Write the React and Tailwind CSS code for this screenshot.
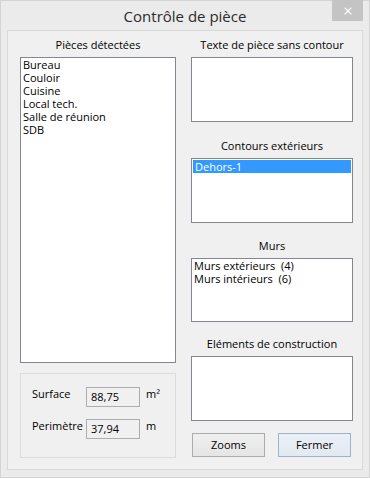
import { X } from 'lucide-react';

const rooms = ['Bureau', 'Couloir', 'Cuisine', 'Local tech.', 'Salle de réunion', 'SDB'];

function Label({ children, h }) {
  return (
    <div className={`flex items-end justify-center pb-[6px] ${h}`}>
      <span className="leading-[13px] text-black">{children}</span>
    </div>
  );
}

function ListBox({ h, children }) {
  return (
    <div className={`border border-[#828790] bg-white ${h}`}>{children}</div>
  );
}

function Field({ label, value, unit }) {
  return (
    <div className="flex items-start">
      <span className="w-[54px] leading-[14px]">{label}</span>
      <div className="w-[54px] h-[20px] border border-[#adadad] bg-[#f0f0f0] pl-[4px] flex items-center">
        {value}
      </div>
      <span className="ml-[6px] leading-[14px]">{unit}</span>
    </div>
  );
}

export default function App() {
  return (
    <div
      className="w-[370px] h-[478px] bg-[#ebebeb] border border-[#d4d4d4] flex flex-col text-[11px] text-black"
      style={{ fontFamily: '"Open Sans", "Noto Sans", sans-serif' }}
    >
      {/* Title bar */}
      <div className="relative h-[29px] flex items-center justify-center">
        <span className="text-[15px] text-[#2b2b2b] leading-none pt-[1px]">Contrôle de pièce</span>
        <div className="absolute top-[-1px] right-[6px] w-[31px] h-[21px] bg-[#c4c4c4] flex items-center justify-center">
          <X size={12} strokeWidth={2.2} className="text-white" />
        </div>
      </div>

      {/* Panel */}
      <div className="ml-[6px] w-[356px] h-[440px] border border-[#d9d9d9] bg-[#f0f0f0] flex pl-[12px] gap-[15px]">
        {/* Left column */}
        <div className="w-[156px] flex flex-col">
          <Label h="h-[26px]">Pièces détectées</Label>
          <ListBox h="h-[306px]">
            <div className="pl-[2px] flex flex-col leading-[13px]">
              {rooms.map((r) => (
                <span key={r}>{r}</span>
              ))}
            </div>
          </ListBox>
          <div className="mt-[10px] h-[85px] border border-[#dcdcdc] pl-[11px] pt-[13px] flex flex-col gap-[12px]">
            <Field label="Surface" value="88,75" unit="m²" />
            <Field label="Perimètre" value="37,94" unit="m" />
          </div>
        </div>

        {/* Right column */}
        <div className="w-[162px] flex flex-col">
          <Label h="h-[26px]">Texte de pièce sans contour</Label>
          <ListBox h="h-[65px]" />
          <Label h="h-[36px]">Contours extérieurs</Label>
          <ListBox h="h-[65px]">
            <div className="mx-[1px] mt-[1px] h-[13px] bg-[#3399ff] text-white pl-[2px] leading-[13px]">Dehors-1</div>
          </ListBox>
          <Label h="h-[35px]">Murs</Label>
          <ListBox h="h-[64px]">
            <div className="pl-[2px] flex flex-col leading-[13px] whitespace-pre">
              <span>Murs extérieurs  (4)</span>
              <span>Murs intérieurs  (6)</span>
            </div>
          </ListBox>
          <Label h="h-[34px]">Eléments de construction</Label>
          <ListBox h="h-[65px]" />
          <div className="mt-[12px] flex gap-[13px] pl-[1px]">
            <button className="w-[73px] h-[24px] border border-[#acacac] bg-gradient-to-b from-[#f0f0f0] to-[#e5e5e5]">Zooms</button>
            <button className="w-[73px] h-[24px] border border-[#9cb3cc] bg-gradient-to-b from-[#eaf0f6] to-[#e2e9f1]">Fermer</button>
          </div>
        </div>
      </div>
    </div>
  );
}
